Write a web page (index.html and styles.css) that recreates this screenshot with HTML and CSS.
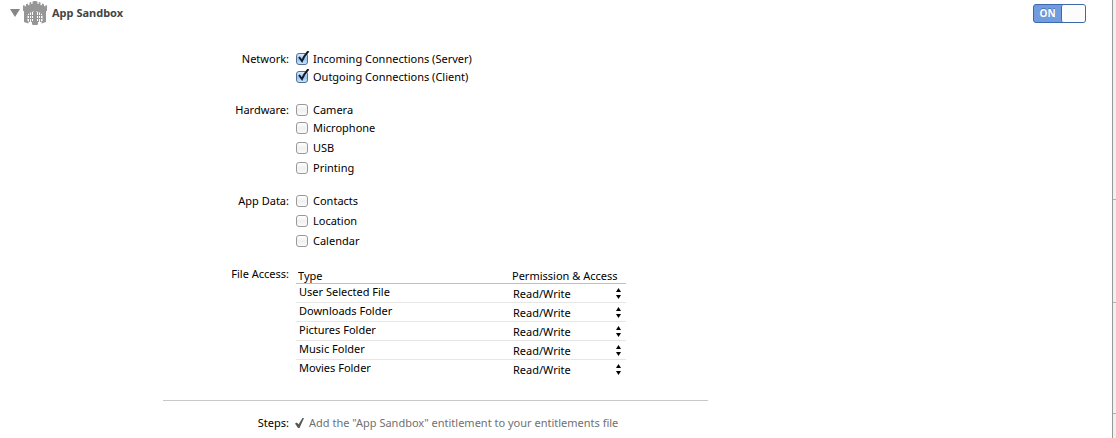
FILE: index.html
```html
<!DOCTYPE html>
<html lang="en">
<head>
    <meta charset="UTF-8">
    <meta name="viewport" content="width=device-width, initial-scale=1.0">
    <title>App Sandbox</title>
    <link rel="stylesheet" href="styles.css">
</head>
<body>
    <main class="capability">
        <header class="capability-header">
            <button class="disclosure" type="button" aria-label="Collapse section">
                <svg width="10" height="8" viewBox="0 0 10 8"><path d="M0 0H10L5 8Z" fill="#868686"/></svg>
            </button>
            <svg class="castle" width="24" height="24" viewBox="0 0 24 24">
                <path fill="#969696" d="M0 4.5L1.5 4V5.5L3 5V3.2L5 2.6V4.3L6.5 3.9V1.6L8.3 1.1V3H9.5V.4L11.5 0H12.5L14.5 .4V3H15.7V1.1L17.5 1.6V3.9L19 4.3V2.6L21 3.2V5L22.5 5.5V4L24 4.5V9.5L23 10.5V21L18.5 22.5V20H15V23.5L12 24.5L9 23.5V20H5.5V22.5L1 21V10.5L0 9.5Z"/>
                <path fill="#fff" d="M4.5 20V15Q5 11 11 10.5V20ZM19.5 20V15Q19 11 13 10.5V20Z"/>
                <path d="M6.5 12V21M8.5 11V21M10.5 11V23M13.5 11V23M15.5 11V21M17.5 12V21M4.5 14.5H11M13 14.5H19.5M4.5 17.5H11M13 17.5H19.5" fill="none" stroke="#969696"/>
            </svg>
            <h1>App Sandbox</h1>
            <button class="switch" type="button" role="switch" aria-checked="true" aria-label="App Sandbox">
                <span class="switch-text">ON</span>
                <span class="switch-knob"></span>
            </button>
        </header>

        <div class="settings">
            <span class="label" id="network">Network:</span>
            <ul class="options" aria-labelledby="network">
                <li><label><input type="checkbox" checked><svg class="tick" width="14" height="14" viewBox="0 0 14 14"><path d="M3 6L6 10Q8 5 12.5 0"/></svg>Incoming Connections (Server)</label></li>
                <li class="close"><label><input type="checkbox" checked><svg class="tick" width="14" height="14" viewBox="0 0 14 14"><path d="M3 6L6 10Q8 5 12.5 0"/></svg>Outgoing Connections (Client)</label></li>
            </ul>

            <span class="label" id="hardware">Hardware:</span>
            <ul class="options" aria-labelledby="hardware">
                <li><label><input type="checkbox">Camera</label></li>
                <li class="close"><label><input type="checkbox">Microphone</label></li>
                <li><label><input type="checkbox">USB</label></li>
                <li><label><input type="checkbox">Printing</label></li>
            </ul>

            <span class="label" id="app-data">App Data:</span>
            <ul class="options" aria-labelledby="app-data">
                <li><label><input type="checkbox">Contacts</label></li>
                <li><label><input type="checkbox">Location</label></li>
                <li><label><input type="checkbox">Calendar</label></li>
            </ul>

            <span class="label" id="file-access">File Access:</span>
            <table class="access" aria-labelledby="file-access">
                <thead>
                    <tr><th>Type</th><th class="permission">Permission &amp; Access</th></tr>
                </thead>
                <tbody>
                    <tr>
                        <td><label for="user-file">User Selected File</label></td>
                        <td><div class="picker"><select id="user-file"><option>Read/Write</option><option>Read Only</option></select><svg width="5" height="11" viewBox="0 0 5 11"><path d="M2.5 0L5 4H0ZM2.5 11L0 7H5Z"/></svg></div></td>
                    </tr>
                    <tr>
                        <td><label for="downloads">Downloads Folder</label></td>
                        <td><div class="picker"><select id="downloads"><option>Read/Write</option><option>Read Only</option></select><svg width="5" height="11" viewBox="0 0 5 11"><path d="M2.5 0L5 4H0ZM2.5 11L0 7H5Z"/></svg></div></td>
                    </tr>
                    <tr>
                        <td><label for="pictures">Pictures Folder</label></td>
                        <td><div class="picker"><select id="pictures"><option>Read/Write</option><option>Read Only</option></select><svg width="5" height="11" viewBox="0 0 5 11"><path d="M2.5 0L5 4H0ZM2.5 11L0 7H5Z"/></svg></div></td>
                    </tr>
                    <tr>
                        <td><label for="music">Music Folder</label></td>
                        <td><div class="picker"><select id="music"><option>Read/Write</option><option>Read Only</option></select><svg width="5" height="11" viewBox="0 0 5 11"><path d="M2.5 0L5 4H0ZM2.5 11L0 7H5Z"/></svg></div></td>
                    </tr>
                    <tr>
                        <td><label for="movies">Movies Folder</label></td>
                        <td><div class="picker"><select id="movies"><option>Read/Write</option><option>Read Only</option></select><svg width="5" height="11" viewBox="0 0 5 11"><path d="M2.5 0L5 4H0ZM2.5 11L0 7H5Z"/></svg></div></td>
                    </tr>
                </tbody>
            </table>
        </div>

        <footer class="steps">
            <span class="label">Steps:</span>
            <p class="step"><svg width="9" height="10" viewBox="0 0 9 10"><path d="M0 5.5L2 4.5L3.5 6.5L7.5 0H9L4.5 10H3Z" fill="#555"/></svg>Add the "App Sandbox" entitlement to your entitlements file</p>
        </footer>
    </main>

    <!-- Edge of the utility panel -->
    <aside class="panel-edge">
        <div></div>
        <div></div>
        <div></div>
    </aside>
</body>
</html>
```

FILE: styles.css
```css
* {
    box-sizing: border-box;
}
body {
    margin: 0;
    min-height: 100vh;
    display: flex;
    background-color: #fff;
    color: #000;
    font-family: "Noto Sans", "Open Sans", sans-serif;
    font-size: 11px;
    line-height: 18px;
}
.capability {
    flex: 1;
}
.capability-header {
    display: flex;
    align-items: center;
    height: 26px;
    padding: 0 26px 0 10px;
}
.disclosure {
    display: flex;
    padding: 0;
    margin-right: 3px;
    border: none;
    background: none;
}
.castle {
    margin-right: 5px;
}
h1 {
    margin: 0;
    font-size: 11px;
    font-weight: bold;
    color: #444;
}
.switch {
    display: flex;
    width: 53px;
    height: 19px;
    margin-left: auto;
    padding: 0;
    border: 1px solid #3d68ad;
    border-radius: 3px;
    background-color: #719cdd;
    color: #fff;
    font: bold 10px/17px "Noto Sans", sans-serif;
}
.switch-text {
    flex: 1;
    text-shadow: 0 -1px 0 #4a74b4;
}
.switch-knob {
    width: 24px;
    height: 17px;
    border-left: 1px solid #3d68ad;
    border-radius: 2px;
    background-color: #fcfcfc;
}
.settings {
    display: grid;
    grid-template-columns: 126px 330px;
    column-gap: 7px;
    row-gap: 15px;
    padding: 24px 0 22px 163px;
}
.label {
    text-align: right;
}
.options {
    margin: 0;
    padding: 0;
    list-style: none;
}
.options li + li {
    margin-top: 2px;
}
.options li + .close {
    margin-top: 0;
}
.options label {
    position: relative;
    display: flex;
    align-items: center;
    gap: 5px;
}
.options input {
    appearance: none;
    width: 12px;
    height: 12px;
    margin: 0;
    border: 1px solid #999;
    border-radius: 3px;
    background: linear-gradient(#fff, #f0f0f0 50%, #fafafa);
}
.options input:checked {
    border-color: #536e98;
    background: linear-gradient(#dcebfa, #96c3ee 50%, #c4e5fb);
}
.tick {
    display: none;
    position: absolute;
    left: 0;
    top: 1px;
    fill: none;
    stroke: #101c2c;
    stroke-width: 2;
}
.options input:checked + .tick {
    display: block;
}
.access {
    width: 100%;
    border-collapse: separate;
    border-spacing: 0;
    table-layout: fixed;
}
.access th {
    height: 19px;
    padding: 3px 0 0 2px;
    border-bottom: 1px solid #c0c0c0;
    font-weight: normal;
    text-align: left;
    line-height: 15px;
}
.access .permission {
    width: 116px;
}
.access td {
    height: 19px;
    padding: 0 0 0 3px;
    border-bottom: 1px solid #e6e6e6;
    vertical-align: top;
    line-height: 16px;
}
.access tr:last-child td {
    height: 18px;
    border-bottom: none;
}
.picker {
    position: relative;
}
.picker select {
    appearance: none;
    display: block;
    width: 100%;
    height: 18px;
    padding: 2px 0 0;
    border: none;
    background: none;
    color: #000;
    font: inherit;
    line-height: 16px;
}
.picker svg {
    position: absolute;
    right: 5px;
    top: 4px;
    pointer-events: none;
}
.steps {
    display: grid;
    grid-template-columns: 126px 1fr;
    column-gap: 6px;
    max-width: 545px;
    margin-left: 163px;
    padding-top: 13px;
    border-top: 1px solid #c8c8c8;
}
.step {
    display: flex;
    align-items: center;
    gap: 5px;
    margin: 0;
    color: #707070;
}
.panel-edge {
    width: 4px;
    display: grid;
    grid-template-rows: 200px 103px 111px;
    border-left: 1px solid #999;
    background-color: #f0f0f0;
}
.panel-edge div {
    border-bottom: 1px solid #b0b0b0;
}
```
